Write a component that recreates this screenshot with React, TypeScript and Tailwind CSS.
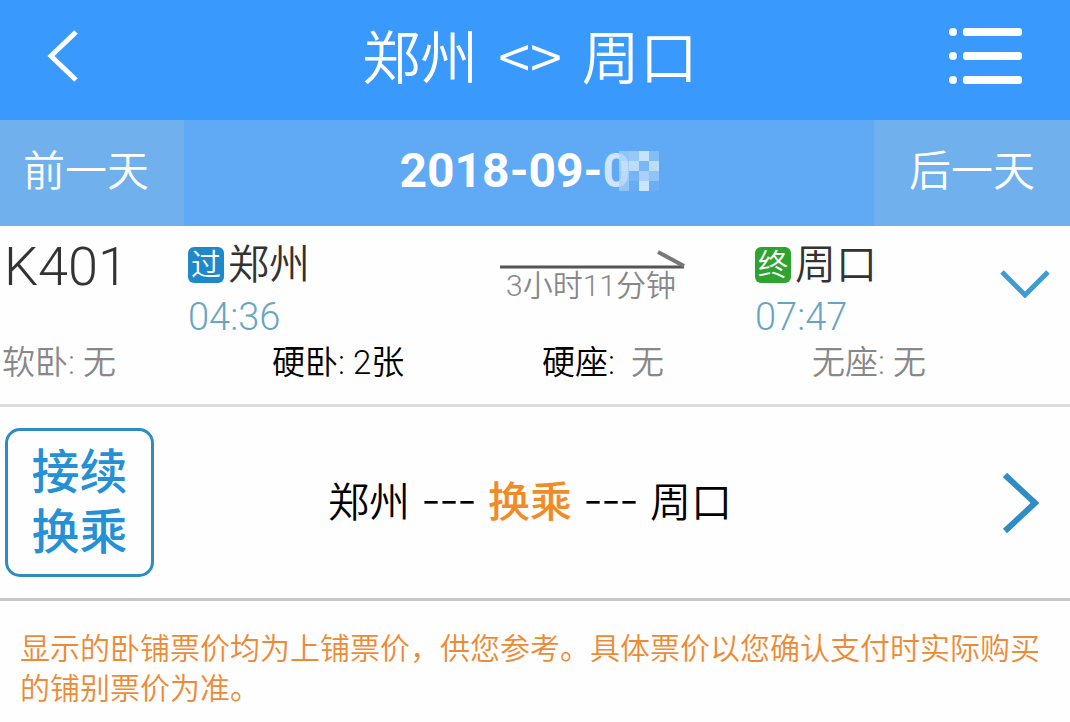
import clsx from "clsx";

interface Seat {
    name: string;
    count: string;
    available: boolean;
    countAvailable: boolean;
}

const seats: Seat[] = [
    { name: "软卧:", count: "无", available: false, countAvailable: false },
    { name: "硬卧:", count: "2张", available: true, countAvailable: true },
    { name: "硬座:", count: "无", available: true, countAvailable: false },
    { name: "无座:", count: "无", available: false, countAvailable: false },
];

const mosaic = [
    ["#a5d2f8", "#97c8f9", "#c5e4f8", "#84bdf5"],
    ["#bddcf6", "#bcdcf8", "#7ab8f4", "#bcdcf8"],
    ["#b0d6f7", "#74b5f6", "#a8d0f8", "#90c4f6"],
    ["#a8d0f7", "#66acf6", "#c8e6f8", "#6bb0f6"],
];

function Header() {
    return (
        <header className="flex h-[120px] items-center justify-between bg-[#3999fd] pr-12 pl-[46px] text-white">
            <button type="button" aria-label="返回" className="w-[66px] pb-2">
                <svg width="34" height="54" viewBox="0 0 34 54" fill="none" stroke="currentColor" strokeWidth="5">
                    <path d="M30 3 5 27l25 24" />
                </svg>
            </button>
            <h1 className="flex gap-5 pb-3 font-['Noto_Sans_CJK_SC',sans-serif] text-[58px] leading-[80px] font-[350]">
                <span>郑州</span>
                <span>&lt;&gt;</span>
                <span>周口</span>
            </h1>
            <button type="button" aria-label="菜单" className="pb-2">
                <svg width="74" height="56" viewBox="0 0 74 56" fill="currentColor">
                    {[0, 24, 48].map((y) => (
                        <g key={y}>
                            <circle cx="5" cy={y + 4} r="4" />
                            <rect x="15" y={y} width="59" height="8" rx="3" />
                        </g>
                    ))}
                </svg>
            </button>
        </header>
    );
}

function DateBar() {
    return (
        <nav className="flex h-[106px] bg-[#60a9f5] text-white">
            <button type="button" className="w-[184px] bg-[#70b0ec] pr-3 pb-1 text-[42px] font-[350]">
                前一天
            </button>
            <div className="flex flex-1 items-center justify-center pb-1 text-[48px] font-bold">
                <span>2018-09-</span>
                <span className="relative w-[56px]">
                    <span className="opacity-70">0</span>
                    <svg className="absolute top-1/2 right-0 -translate-y-1/2" width="40" height="40" shapeRendering="crispEdges">
                        {mosaic.map((row, y) =>
                            row.map((fill, x) => (
                                <rect
                                    key={`${x}-${y}`}
                                    x={x * 10}
                                    y={y * 10}
                                    width="10"
                                    height="10"
                                    fill={fill}
                                    fillOpacity={x === 0 ? 0.7 : 1}
                                />
                            ))
                        )}
                    </svg>
                </span>
            </div>
            <button type="button" className="w-[196px] bg-[#70b0ec] pb-1 text-[42px] font-[350]">
                后一天
            </button>
        </nav>
    );
}

interface StationProps {
    badge: string;
    badgeClass: string;
    name: string;
    time: string;
}

function Station({ badge, badgeClass, name, time }: StationProps) {
    return (
        <div>
            <div className="flex h-[54px] items-center gap-1">
                <span className={clsx("flex size-9 items-center justify-center rounded-md text-[30px] leading-9 text-white", badgeClass)}>
                    {badge}
                </span>
                <span className="text-[41px] leading-[52px] text-[#333]">{name}</span>
            </div>
            <div className="h-[50px] text-[38px] leading-[50px] text-[#68a5c5]">{time}</div>
        </div>
    );
}

function TrainRow() {
    return (
        <section className="border-b-3 border-[#dcdcde] pt-3 pb-5 font-[350]">
            <div className="grid grid-cols-[188fr_312fr_255fr_245fr_70fr]">
                <h2 className="pl-1 text-[54px] leading-[58px] text-[#333]">K401</h2>
                <Station badge="过" badgeClass="bg-[#1f88c9]" name="郑州" time="04:36" />
                <div className="w-[186px] pt-3">
                    <svg width="186" height="20" viewBox="0 0 186 20" fill="none">
                        <path d="M0 17h184" stroke="#555" strokeWidth="3" />
                        <path d="m158 2 26 14" stroke="#777" strokeWidth="4" />
                    </svg>
                    <p className="pr-1 text-center text-[30px] leading-8 text-[#888]">3小时11分钟</p>
                </div>
                <Station badge="终" badgeClass="bg-[#2fa32f]" name="周口" time="07:47" />
                <button type="button" aria-label="展开" className="self-start pt-8">
                    <svg width="50" height="30" viewBox="0 0 50 30" fill="none" stroke="#3f9bd0" strokeWidth="5">
                        <path d="m2 2 23 23L48 2" />
                    </svg>
                </button>
            </div>
            <ul className="grid grid-cols-[270fr_270fr_270fr_258fr] pl-0.5 text-[33px] leading-[42px]">
                {seats.map((seat) => (
                    <li key={seat.name} className={clsx("flex", seat.available && !seat.countAvailable ? "gap-4" : "gap-2")}>
                        <span className={seat.available ? "text-black" : "text-[#888]"}>{seat.name}</span>
                        <span className={seat.countAvailable ? "text-black" : "text-[#888]"}>{seat.count}</span>
                    </li>
                ))}
            </ul>
        </section>
    );
}

function TransferRow() {
    return (
        <a href="#transfer" className="flex items-center justify-between border-b-3 border-[#c8c8cc] py-[21px] pr-[30px] pl-[5px]">
            <span className="flex size-[149px] flex-col items-center justify-center rounded-[15px] border-3 border-[#2f8bc4] text-[48px] leading-[60px] font-medium text-[#2490d6]">
                <span>接续</span>
                <span>换乘</span>
            </span>
            <span className="flex items-baseline gap-3 pr-24 pb-3 font-['Noto_Sans_CJK_SC',sans-serif] text-[41px] leading-[60px] font-[350] text-black">
                <span>郑州</span>
                <span className="text-[54px] font-light">---</span>
                <span className="text-[42px] font-medium text-[#f08c28]">换乘</span>
                <span className="text-[54px] font-light">---</span>
                <span>周口</span>
            </span>
            <svg width="38" height="62" viewBox="0 0 38 62" fill="none" stroke="#2e8cc6" strokeWidth="6">
                <path d="m3 3 30 28L3 59" />
            </svg>
        </a>
    );
}

export default function App() {
    return (
        <main className="min-h-screen bg-[#fefefe] font-[Roboto,'Noto_Sans_CJK_SC',sans-serif]">
            <Header />
            <DateBar />
            <TrainRow />
            <TransferRow />
            <p className="px-5 pt-7 text-[30px] leading-10 font-[350] text-[#ee8a35]">
                显示的卧铺票价均为上铺票价，供您参考。具体票价以您确认支付时实际购买的铺别票价为准。
            </p>
        </main>
    );
}
